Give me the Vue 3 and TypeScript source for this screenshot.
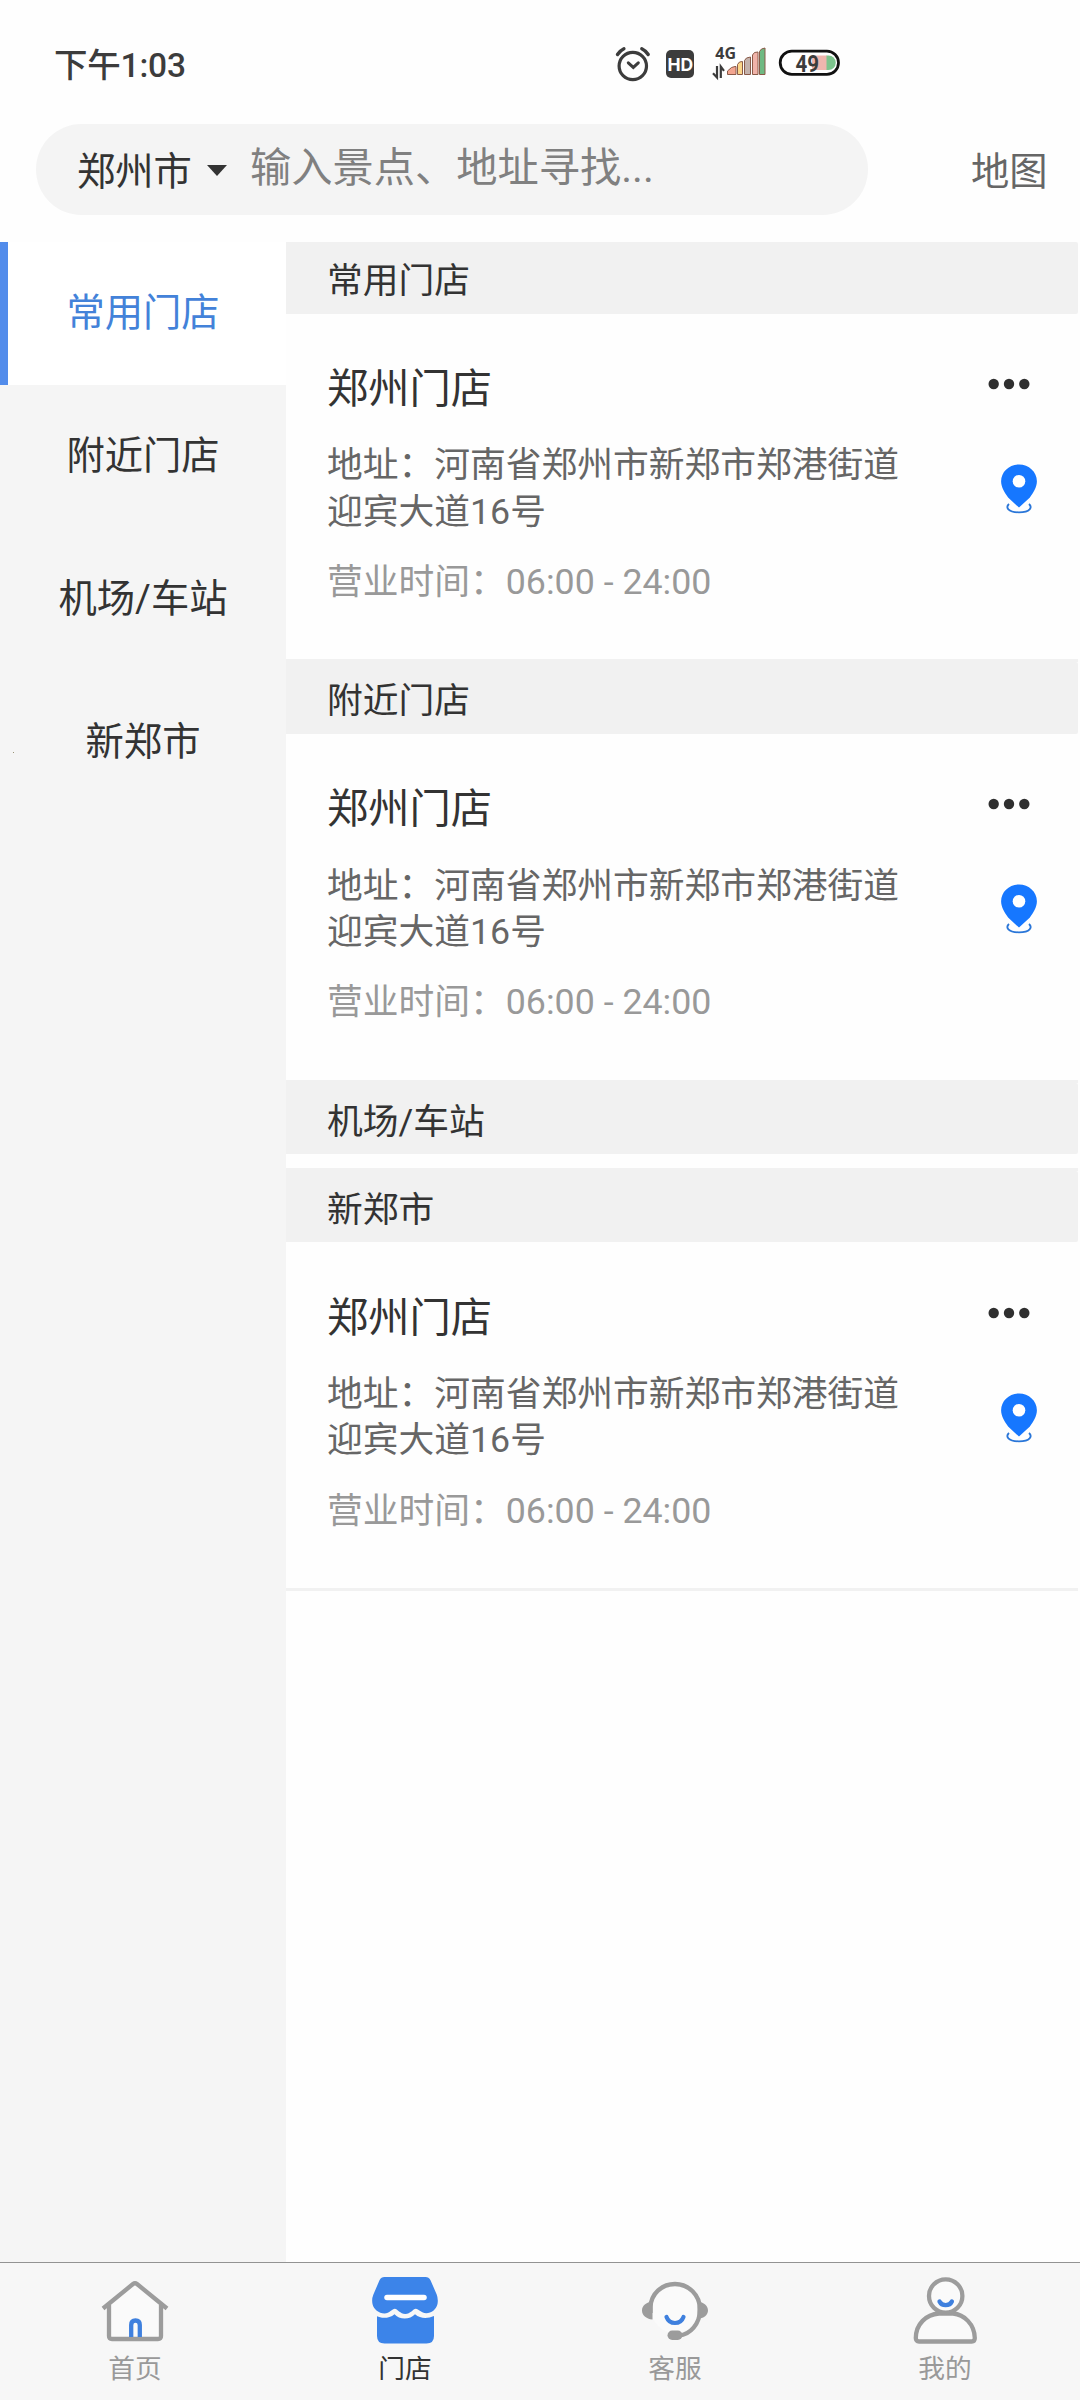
<script setup lang="ts">
interface Store {
  name: string
  address: string
  hours: string
}

interface Section {
  title: string
  stores: Store[]
}

const store: Store = {
  name: '郑州门店',
  address: '地址：河南省郑州市新郑市郑港街道迎宾大道16号',
  hours: '营业时间：06:00 - 24:00',
}

const sections: Section[] = [
  { title: '常用门店', stores: [store] },
  { title: '附近门店', stores: [store] },
  { title: '机场/车站', stores: [] },
  { title: '新郑市', stores: [store] },
]

const tabs: string[] = ['首页', '门店', '客服', '我的']
const activeSection = 0
const activeTab = 1
</script>

<template>
  <div class="app">
    <header class="status">
      <span class="time">下午1:03</span>
      <svg class="status-icons" viewBox="610 40 240 45" width="240" height="45">
        <g fill="none" stroke="#3c3c3c" stroke-linecap="round">
          <circle cx="632.8" cy="66" r="13.7" stroke-width="3.2" />
          <path d="M628.3 62.8l5 4.6 5-4.6" stroke-width="3" />
          <path d="M617.5 54.5q2.6-4 6.4-5.8M641.8 48.7q4 1.900 6.400 5.800" stroke-width="3.400" />
        </g>
        <rect x="666" y="50" width="28" height="28" rx="5" fill="#3c3c3c" />
        <text x="680.3" y="70.800" class="hd">HD</text>
        <text x="715.300" y="58.700" class="net">4G</text>
        <g fill="none" stroke="#3c3c3c" stroke-width="2.200">
          <path d="M717 66v11.500l-4-4.200M720.800 78V66.600l3.200 4.200" />
        </g>
        <g stroke="#8a5a48" stroke-width="1">
          <path d="M727.500 74.500v-3.500l4-3.500 3.500-1h1v8z" fill="#f3a590" />
          <path d="M737.500 74.500v-10l2-2.500 3-.5v13z" fill="#fbd68a" />
          <path d="M744.500 74.500v-14l2-2.500 4-1v17.500z" fill="#c4b2ac" />
          <path d="M752.500 74.500v-19.500l2-2.500 3.500-.5v22.500z" fill="#f0b3a9" />
          <path d="M759.500 74.500v-23l2-2.500 3.500-1v26.500z" fill="#6fb982" />
        </g>
        <rect x="780.200" y="51.200" width="58.300" height="23.200" rx="11.600" fill="#fff" />
        <path d="M812 55.500h15v14.500h-15z" fill="#efb6ae" />
        <path d="M826.500 55.500h2a7.250 7.250 0 0 1 0 14.500h-2z" fill="#7cc48d" />
        <rect x="780.200" y="51.200" width="58.300" height="23.200" rx="11.600" fill="none" stroke="#111" stroke-width="2.800" />
        <text x="795.500" y="71.700" class="battery" textLength="23.500" lengthAdjust="spacingAndGlyphs">49</text>
      </svg>
    </header>

    <div class="search-row">
      <div class="search">
        <span class="city">郑州市</span>
        <i class="caret"></i>
        <span class="placeholder">输入景点、地址寻找...</span>
      </div>
      <span class="map-link">地图</span>
    </div>

    <main class="body">
      <nav class="side">
        <div
          v-for="(section, i) in sections"
          :key="section.title"
          class="side-item"
          :class="{ active: i === activeSection }"
        >{{ section.title }}</div>
        <i class="speck"></i>
      </nav>

      <div class="list">
        <section v-for="section in sections" :key="section.title" class="section">
          <h2 class="section-title">{{ section.title }}</h2>
          <article v-for="item in section.stores" :key="item.name" class="card">
            <div class="info">
              <div class="name">{{ item.name }}</div>
              <div class="address">{{ item.address }}</div>
              <div class="hours">{{ item.hours }}</div>
            </div>
            <div class="actions">
              <svg class="more" viewBox="0 0 44 12" width="44" height="12" fill="#2f2f2f">
                <circle cx="6.700" cy="6" r="5.200" />
                <circle cx="22" cy="6" r="5.200" />
                <circle cx="37.300" cy="6" r="5.200" />
              </svg>
              <svg class="pin" viewBox="0 0 38 52" width="38" height="52">
                <path
                  d="M19 1.500c9.900 0 17.900 7.500 17.900 16.700 0 6-3.500 11.300-7 16.200L19 44.600 8.100 34.400c-3.500-4.900-7-10.200-7-16.200C1.100 9 9.100 1.500 19 1.500z"
                  fill="#1677ff"
                />
                <circle cx="19" cy="18.300" r="6.300" fill="#fff" />
                <path
                  d="M9 41c-3.500 3.200-1.500 8.300 10 8.300s13.500-5.100 10-8.300"
                  fill="none"
                  stroke="#2a76d8"
                  stroke-width="1.800"
                />
              </svg>
            </div>
          </article>
        </section>
      </div>
    </main>

    <footer class="tabbar">
      <div v-for="(tab, i) in tabs" :key="tab" class="tab" :class="{ current: i === activeTab }">
        <svg v-if="i === 0" viewBox="0 0 70 70" width="70" height="70" fill="none">
          <path d="M9 29v31q0 3 3 3h46q3 0 3-3V29L35 7z" fill="#fafafa" />
          <path
            d="M3 32.500L33 8q2-1.500 4 0L67 32.500M9 29v31q0 3 3 3h46q3 0 3-3V29"
            stroke="#9c9c9c"
            stroke-width="4.300"
          />
          <path d="M31.200 61V49q0-4.500 4.300-4.500t4.300 4.500V61" stroke="#3f80de" stroke-width="4.300" />
        </svg>
        <svg v-else-if="i === 1" viewBox="0 0 70 70" width="70" height="70">
          <path
            d="M14.500 1h41q3.300 0 5 3.200l6.200 14.300q1.700 4.500.8 9.500c-1.300 5.500-6 9.200-11.300 9.200-4.700 0-7.700-4.400-10.400-4.400s-5.400 5.300-10.500 5.300-8-5.300-10.500-5.300-5.400 4.600-10.300 4.600C8.800 37.400 3.600 33.200 2.500 28q-1-5 .9-9.500L9.500 4.200Q11.200 1 14.500 1z"
            fill="#3c84e9"
          />
          <path
            d="M7 40.200c3.400 1.800 11.600 3 17.500-2 4.500 5.500 15.500 5.800 20.500 0 5.500 4.700 12.500 4.500 19 1.800V60q0 7.500-7.500 7.500H14.500q-7.500 0-7.500-7.500z"
            fill="#3c84e9"
          />
          <path d="M17 21.500h37" stroke="#fff" stroke-width="5.500" stroke-linecap="round" />
        </svg>
        <svg v-else-if="i === 2" viewBox="0 0 70 70" width="70" height="70" fill="none">
          <circle cx="35" cy="33" r="24" fill="#fafafa" />
          <path
            d="M10.500 37V31C11 18 21.500 8 35 8s25 11 25 25.500S50 58.500 39 59.500"
            stroke="#9c9c9c"
            stroke-width="4.300"
          />
          <path
            d="M12.500 25.500v18C6 43 2 39 2 34.500s4-8.300 10.500-9zM57.500 25.500v17.500c6.500-.8 10.500-4 10.500-8.500s-4-8.300-10.500-9z"
            fill="#9c9c9c"
          />
          <rect x="27.500" y="54.500" width="15" height="9.500" rx="4.700" fill="#9c9c9c" />
          <path
            d="M26.500 41c1.500 4 4.500 6 8.500 6s7-2 8.500-6"
            stroke="#3f80de"
            stroke-width="4.200"
            stroke-linecap="round"
          />
        </svg>
        <svg v-else viewBox="0 0 70 70" width="70" height="70" fill="none">
          <g fill="#fafafa" stroke="#9c9c9c" stroke-width="4.300">
            <path d="M29 37.500h14c11 1 21.500 10.500 21.800 24.500q0 3.500-3 3.500H9q-3.200 0-3.200-3.500C6 48 16 38.500 29 37.500z" />
            <circle cx="35.700" cy="20" r="16.700" />
          </g>
          <path
            d="M29.500 25.500c1.200 2.500 3.200 3.700 6.200 3.700s5-1.200 6.200-3.700"
            stroke="#3f80de"
            stroke-width="4.300"
            stroke-linecap="round"
          />
        </svg>
        <span class="tab-label">{{ tab }}</span>
      </div>
    </footer>
  </div>
</template>

<style>
body {
  margin: 0;
  background: #fff;
}
</style>

<style scoped>
.app {
  display: flex;
  flex-direction: column;
  width: 1080px;
  height: 2400px;
  overflow: hidden;
  background: #fefefe;
  color: #333;
  font-family: Roboto, "Noto Sans CJK SC", sans-serif;
}

.status {
  display: flex;
  align-items: center;
  height: 124px;
  flex: none;
}

.time {
  width: 556px;
  padding: 8px 0 0 54px;
  font-size: 33.500px;
  font-weight: 500;
  letter-spacing: -0.200px;
  line-height: 40px;
  color: #3c3c3c;
}

.hd {
  font: 700 17.500px Inter, sans-serif;
  fill: #fff;
  text-anchor: middle;
}

.net {
  font: 700 16px "Noto Sans", sans-serif;
  fill: #3c3c3c;
}

.battery {
  font: 700 24.500px Roboto, sans-serif;
  fill: #3c3c3c;
}

.search-row {
  display: flex;
  align-items: center;
  flex: none;
  height: 91px;
  margin-bottom: 27px;
  padding-left: 36px;
}

.search {
  display: flex;
  align-items: center;
  box-sizing: border-box;
  width: 832px;
  height: 91px;
  padding-left: 41px;
  border-radius: 46px;
  background: #f4f4f4;
}

.city,
.map-link {
  font-size: 38.300px;
  line-height: 48px;
  padding-top: 4px;
}

.caret {
  margin: 1px 0 0 15px;
  border: 10px solid transparent;
  border-top: 11px solid #333;
  border-bottom: 0;
}

.placeholder {
  margin: 0 0 3px 23px;
  font-size: 41.250px;
  line-height: 48px;
  color: #808080;
}

.map-link {
  margin-left: 103px;
  color: #666;
}

.body {
  display: flex;
  flex: 1;
  min-height: 0;
}

.side {
  position: relative;
  width: 286px;
  background: #f5f5f5;
}

.side-item {
  box-sizing: border-box;
  height: 143px;
  font-size: 38.300px;
  line-height: 142px;
  text-align: center;
}

.side-item.active {
  padding-right: 8px;
  border-left: 8px solid #528ceb;
  background: #fff;
  color: #4382d9;
}

.speck {
  position: absolute;
  left: 13px;
  top: 510px;
  width: 1px;
  height: 1px;
  background: #999377;
}

.list {
  flex: 1;
  padding-right: 2px;
}

.section {
  min-height: 85px;
  border-bottom: 3px solid #f1f1f1;
}

.section-title {
  margin: 0;
  padding-left: 41px;
  height: 71.800px;
  border-radius: 0 2px 2px 0;
  background: #f1f1f1;
  font-size: 35.750px;
  font-weight: 400;
  line-height: 78px;
}

.card {
  display: flex;
  justify-content: space-between;
  box-sizing: border-box;
  height: 345.500px;
  padding: 46.400px 40px 0 41px;
}

.info {
  width: 590px;
}

.name {
  font-size: 41.250px;
  line-height: 58px;
}

.address {
  margin-top: 24.300px;
  font-size: 35.750px;
  line-height: 46.300px;
  color: #666;
}

.hours {
  margin-top: 24px;
  font-size: 35.750px;
  line-height: 46px;
  color: #999;
}

.actions {
  display: flex;
  flex-direction: column;
  align-items: flex-end;
  width: 60px;
}

.more {
  margin: 18px 7px 0 0;
}

.pin {
  margin-top: 73px;
}

.tabbar {
  display: flex;
  flex: none;
  box-sizing: border-box;
  height: 138px;
  border-top: 1px solid #939393;
  background: #f7f7f7;
}

.tab {
  display: flex;
  flex: 1;
  flex-direction: column;
  align-items: center;
  padding-top: 13px;
  color: #999;
}

.tab-label {
  margin-top: 5px;
  font-size: 26.700px;
  line-height: 36px;
}

.tab.current {
  color: #333;
}
</style>
